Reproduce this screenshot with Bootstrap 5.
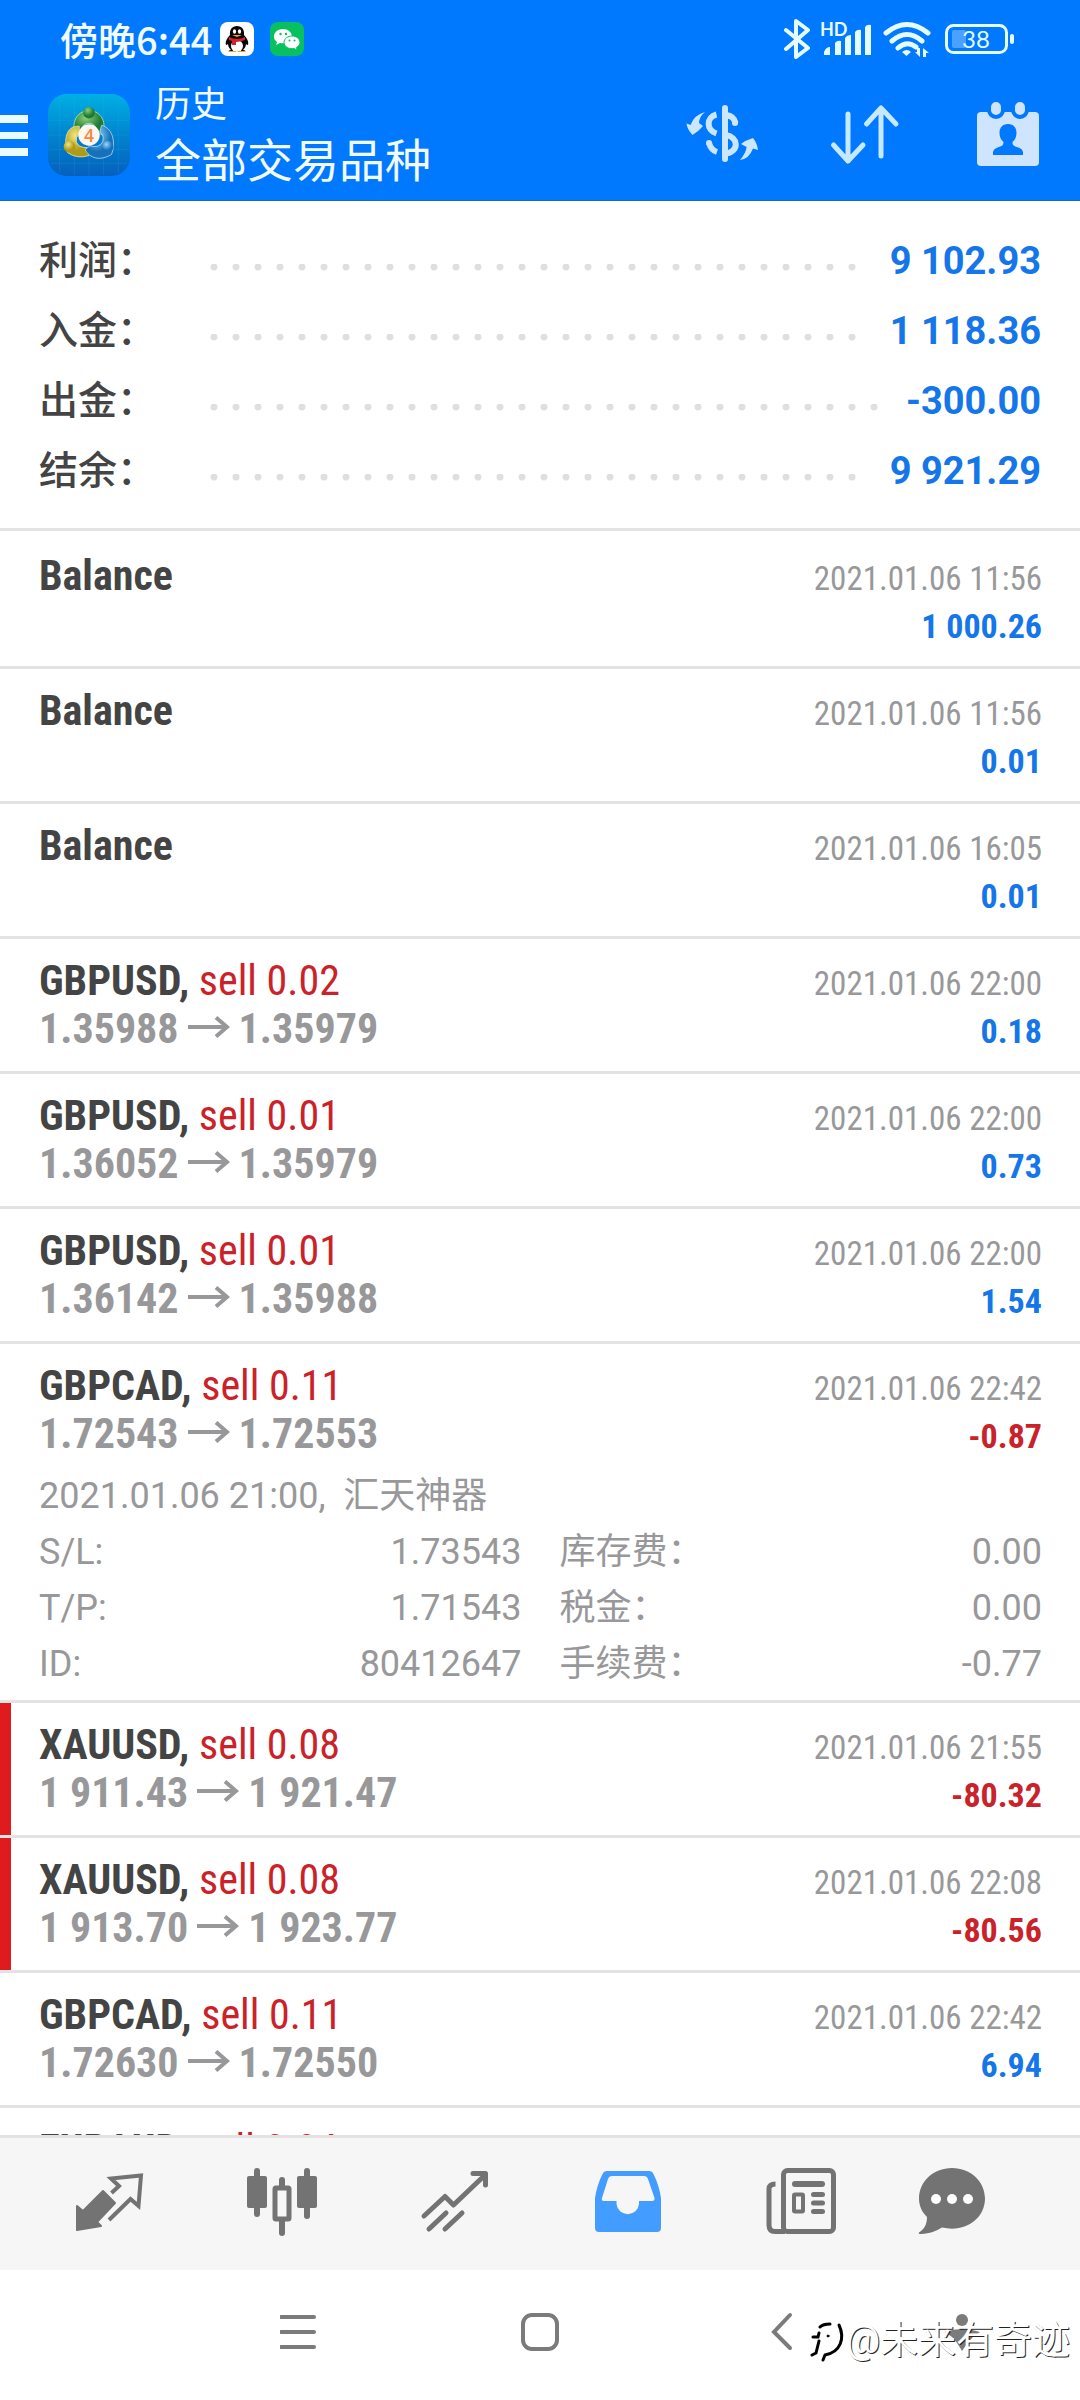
<!DOCTYPE html>
<html lang="zh-CN">
<head>
<meta charset="utf-8">
<meta name="viewport" content="width=device-width, initial-scale=1">
<title>历史</title>
<link rel="stylesheet" href="https://cdn.jsdelivr.net/npm/bootstrap@5.3.0/dist/css/bootstrap.min.css">
<style>
  body { font-family: Roboto, "Noto Sans CJK SC", sans-serif; background: #fff; color: #444; }
  svg { display: block; flex: none; }
  .bar-top { background: #0079ff; color: #f0faff; border-bottom: 1px solid #1a66b0; }
  .status { height: 70px; padding: 8px 65px 0 60px; font: 500 38px/62px "Noto Sans CJK SC", sans-serif; }
  .appbar { height: 130px; padding-right: 36px; }
  .appbar .tools { gap: 71px; }
  .plain-btn { background: none; border: 0; padding: 0; color: inherit; }
  .menu-btn { margin-right: 20px; }
  .heading { margin-left: 25px; padding-top: 2px; }
  .heading h1 { font-size: 46px; line-height: 62px; font-weight: 400; margin: 0; }
  .heading p { font-size: 36px; line-height: 50px; margin: 0; }
  .totals { padding: 25px 39px 22px; border-bottom: 3px solid #e3e3e3; font-size: 39px; line-height: 70px; font-weight: 500; }
  .totals dt { width: 171px; font-weight: 500; }
  .totals dd { color: #1476e8; font-size: 38px; font-weight: 700; margin: 0; }
  .dots { height: 7px; margin: 13px 26px 0 0; background: radial-gradient(circle at 4px 3px, #dfdfdf 3px, transparent 4px) 0 0 / 22px 7px repeat-x; }
  .deals { padding-top: 3px; font-family: "Roboto Condensed", "Liberation Sans Narrow", Roboto, "Noto Sans CJK SC", sans-serif; }
  .deal { padding: 18px 38px 18px 39px; border-bottom: 3px solid #e3e3e3; line-height: 48px; }
  .deal.stopped { background: linear-gradient(#e01b1e, #e01b1e) 0 0 / 11px 100% no-repeat; }
  .line { display: flex; align-items: baseline; height: 48px; }
  .line::before { content: "\200b"; font-size: 42px; }
  .symbol, .side, .price { font-size: 42px; }
  .symbol, .price { font-weight: 700; }
  .side { font-weight: 400; color: #cb2229; }
  .price { color: #98989a; }
  .price svg { display: inline-block; margin: 0 9px; vertical-align: 5px; }
  .stamp { font-size: 33px; color: #98989a; margin-left: auto; }
  .gain, .loss { font-size: 34px; font-weight: 700; color: #1476e8; margin-left: auto; }
  .loss { color: #c9222a; }
  .extra { margin: 10px 0 -10px; font: 400 36px/56px Roboto, "Noto Sans CJK SC", sans-serif; color: #98989a; }
  .extra .cols { display: grid; grid-template-columns: 1fr 1fr; column-gap: 38px; }
  .tabs { height: 135px; background: #f6f6f6; border-top: 3px solid #e3e3e3; color: #737373; padding: 0 63px 0 22px; display: grid; grid-template-columns: repeat(5, 4fr) 3fr; }
  .tabs a { color: inherit; }
  .tabs a.current { color: #439cff; }
  .sysnav { height: 130px; display: grid; grid-template-columns: 3fr 4fr 4fr 4fr 2fr 1fr; color: #7b7b7b; padding-bottom: 6px; }
  .sysnav button:first-child { grid-column: 2; }
  .stamp-mark { right: 10px; bottom: 32px; font-size: 38px; line-height: 56px; color: #fff; text-shadow: 1px 1px 0 #222; }
</style>
<script src="https://cdn.jsdelivr.net/npm/bootstrap@5.3.0/dist/js/bootstrap.bundle.min.js"></script>
</head>
<body>
<svg width="0" height="0" class="position-absolute" aria-hidden="true">
  <symbol id="to" viewBox="0 0 42 22"><path d="M0 11H39M28 1.500L39 11L28 20.500" fill="none" stroke="#98989a" stroke-width="4"/></symbol>
</svg>
<div class="d-flex flex-column vh-100 overflow-hidden position-relative">
  <header class="bar-top flex-shrink-0">
    <div class="status d-flex align-items-center">
      <span>傍晚6:44</span>
      <svg class="ms-2" width="34" height="34" viewBox="0 0 34 34"><rect width="34" height="34" rx="8" fill="#fff"/><path d="M17 4c-5 0-7.500 3.500-7 9-3 3-5 7-4 10 1 0 2-1 2-1 0 3 2 5 3 6-2 0-3 1-2 2h16c1-1 0-2-2-2 1-1 3-3 3-6 0 0 1 1 2 1 1-3-1-7-4-10 .5-5.500-2-9-7-9z" fill="#080808"/><ellipse cx="17" cy="24" rx="6" ry="6" fill="#fff"/><ellipse cx="14.500" cy="9.500" rx="1.600" ry="2.200" fill="#fff"/><ellipse cx="19.500" cy="9.500" rx="1.600" ry="2.200" fill="#fff"/><path d="M12 13h10l-5 2z" fill="#f5a01e"/><path d="M9 15q8 4 16 0v3q-5 2-9 2v3h-4v-4l-3-1z" fill="#d8202a"/><path d="M9 29h6v1H9zM19 29h6v1h-6z" fill="#f5a01e"/></svg>
      <svg class="ms-3" width="34" height="34" viewBox="0 0 34 34"><rect width="34" height="34" rx="8" fill="#07c160"/><path d="M13 7C8 7 4 10 4 14.500c0 2.500 1 4 3 5.500l-1 3 4-2c6 1 11-1 12-6C22 10 18 7 13 7z" fill="#fff"/><path d="M22 14c-4 0-8 2.500-8 6.500s5 7 10 6l3 1.500-.500-2.500c2-1.500 3.500-3 3.500-5 0-4-4-6.500-8-6.500z" fill="#fff" stroke="#07c160"/><g fill="#07c160"><circle cx="10.500" cy="12" r="1.200"/><circle cx="16" cy="12" r="1.200"/><circle cx="19.500" cy="18.500" r="1"/><circle cx="24.500" cy="18.500" r="1"/></g></svg>
      <svg class="ms-auto" width="231" height="42" viewBox="784 18 231 42" fill="none" stroke="#e4fbff">
        <path d="M786 30L808 48L796 57V21L808 30L786 49" stroke-width="4" stroke-linejoin="round" stroke-linecap="round"/>
        <text x="820" y="36" font-family="Lato" font-size="18" font-weight="700" fill="#e4fbff" stroke="none">HD</text>
        <path d="M824 55v-3q2-5 6-5v8zM835 55V43q2-3 6-2v14zM845 55V38q2-3 6-3v20zM855 55V32q2-3 6-2v25zM865 55V27q2-3 6-2v30z" fill="#e4fbff" stroke="none"/>
        <path d="M886 33Q907 16 928 33M892 41Q907 28 922 41M898 48Q907 40 916 47" stroke-width="5" stroke-linecap="round"/>
        <path d="M902 52q5-4 9 0l-4.500 4zM917 48h3v9l-5-5h2zM923 57v-9l6 5h-3v4z" fill="#e4fbff" stroke="none"/>
        <rect x="952" y="30" width="14" height="18" rx="2" fill="#4aa1ff" stroke="none"/>
        <rect x="946.500" y="25.500" width="60" height="27" rx="7" stroke-width="3"/>
        <path d="M1012 36v6" stroke-width="4" stroke-linecap="round"/>
        <text x="976" y="48" text-anchor="middle" font-family="Lato" font-size="24" font-weight="400" fill="#e4fbff" stroke="none">38</text>
      </svg>
    </div>
    <div class="appbar d-flex align-items-center">
      <button class="plain-btn menu-btn" type="button" aria-label="菜单"><svg width="28" height="42" viewBox="0 0 28 42" fill="#eafaff"><path d="M0 1h28v8H0zM0 18h28v7H0zM0 34h28v8H0z"/></svg></button>
      <svg width="82" height="82" viewBox="0 0 84 84">
        <defs><linearGradient id="tile" x2="0" y2="1"><stop stop-color="#00b0e4"/><stop offset=".5" stop-color="#0084cf"/><stop offset="1" stop-color="#0560bd"/></linearGradient>
        <radialGradient id="gr" cx=".4" cy=".3"><stop stop-color="#8bd07a"/><stop offset="1" stop-color="#1d7a34"/></radialGradient>
        <radialGradient id="ye" cx=".4" cy=".3"><stop stop-color="#f4e681"/><stop offset="1" stop-color="#ad9a17"/></radialGradient>
        <radialGradient id="bl" cx=".4" cy=".3"><stop stop-color="#9bd8ff"/><stop offset="1" stop-color="#1671b8"/></radialGradient></defs>
        <rect width="84" height="84" rx="19" fill="url(#tile)"/>
        <path d="M12 3v78M27 1v82M42 0v84M57 1v82M72 3v78M1 27h82M1 42h82M1 57h82M3 71h78" stroke="#35b1e8" stroke-opacity=".2"/>
        <path d="M28 42C23 26 32 17 42 17s19 9 14 25l-6-3q-1-9-8-9t-8 9z" fill="url(#gr)" stroke="#c4e8b8" stroke-width=".8"/>
        <path d="M32 33C18 32 16 48 20 60q10 7 22 3l-2-8q-9 0-11-6-1-5 3-8z" fill="url(#ye)" stroke="#f2eaa8" stroke-width=".8"/>
        <path d="M55 32c13 4 14 20 10 30-12 7-22 4-27-5l5-4q9 3 13-4 2-7-3-10z" fill="url(#bl)" stroke="#b5e0fb" stroke-width=".8"/>
        <circle cx="42" cy="19" r="6" fill="url(#gr)"/><circle cx="22" cy="54" r="6" fill="url(#ye)"/><circle cx="61" cy="54" r="6" fill="url(#bl)"/>
        <circle cx="42" cy="42" r="11" fill="#fff6ef"/>
        <text x="42" y="49" text-anchor="middle" font-family="Open Sans" font-size="18" font-weight="600" fill="#f7873a">4</text>
      </svg>
      <div class="heading"><p>历史</p><h1>全部交易品种</h1></div>
      <div class="tools d-flex ms-auto">
        <button class="plain-btn" type="button" aria-label="交易品种"><svg width="72" height="72" viewBox="0 0 72 72" fill="none" stroke="#cbe6ff" stroke-width="6"><path d="M39 9V60" stroke-linecap="round"/><path d="M30.500 15.500C20 18 20 31 30.500 34.500M40 16Q48 17 49.500 24M40 36C52 38 54 52 40 54.500M23 44Q25 51 31 53"/><path d="M49 24h.1M23 44h.1" stroke-linecap="round"/><path d="M19 13Q13 18 13 24L17 27Q12 33 6.500 36Q1 30 .5 24.500L4.500 26Q8 16 19 13zM54 61Q60 54 60.600 48L55 45Q60 41 67 39Q71 44 72 51L67 49.500Q63 60 54 61z" fill="#cbe6ff" stroke="none"/></svg></button>
        <button class="plain-btn" type="button" aria-label="排序"><svg width="72" height="72" viewBox="0 0 72 72" fill="none" stroke="#c6e9ff" stroke-width="5" stroke-linecap="round" stroke-linejoin="round"><path d="M19 15V62M4.500 46L19 62L34 46M52 57V9M37.500 25L52 9L67 25"/></svg></button>
        <button class="plain-btn" type="button" aria-label="日期"><svg width="72" height="72" viewBox="0 0 72 72"><rect x="5" y="13" width="62" height="54" rx="4" fill="#cfe4ff"/><g fill="#cfe4ff" stroke="#0079ff" stroke-width="4"><rect x="17" y="1" width="14" height="17" rx="7"/><rect x="41" y="1" width="14" height="17" rx="7"/></g><path d="M36 25c-6 0-8.500 4-8.500 9 0 4 1.500 7 4 9 0 4-2 4-7 6q-3 1-3.500 4v3h30v-3q-.5-3-3.500-4c-5-2-7-2-7-6 2.500-2 4-5 4-9 0-5-2.500-9-8.500-9z" fill="#0079ff"/></svg></button>
      </div>
    </div>
  </header>

  <main class="flex-grow-1 overflow-hidden">
    <dl class="totals mb-0">
      <div class="d-flex align-items-center"><dt>利润：</dt><span class="dots flex-grow-1"></span><dd>9 102.93</dd></div>
      <div class="d-flex align-items-center"><dt>入金：</dt><span class="dots flex-grow-1"></span><dd>1 118.36</dd></div>
      <div class="d-flex align-items-center"><dt>出金：</dt><span class="dots flex-grow-1"></span><dd>-300.00</dd></div>
      <div class="d-flex align-items-center"><dt>结余：</dt><span class="dots flex-grow-1"></span><dd>9 921.29</dd></div>
    </dl>
    <ul class="deals list-unstyled mb-0">
      <li class="deal">
        <div class="line"><span class="symbol">Balance</span><span class="stamp">2021.01.06 11:56</span></div>
        <div class="line"><span class="gain">1 000.26</span></div>
      </li>
      <li class="deal">
        <div class="line"><span class="symbol">Balance</span><span class="stamp">2021.01.06 11:56</span></div>
        <div class="line"><span class="gain">0.01</span></div>
      </li>
      <li class="deal">
        <div class="line"><span class="symbol">Balance</span><span class="stamp">2021.01.06 16:05</span></div>
        <div class="line"><span class="gain">0.01</span></div>
      </li>
      <li class="deal">
        <div class="line"><span class="symbol">GBPUSD, <span class="side">sell 0.02</span></span><span class="stamp">2021.01.06 22:00</span></div>
        <div class="line"><span class="price">1.35988<svg width="42" height="22"><use href="#to"/></svg>1.35979</span><span class="gain">0.18</span></div>
      </li>
      <li class="deal">
        <div class="line"><span class="symbol">GBPUSD, <span class="side">sell 0.01</span></span><span class="stamp">2021.01.06 22:00</span></div>
        <div class="line"><span class="price">1.36052<svg width="42" height="22"><use href="#to"/></svg>1.35979</span><span class="gain">0.73</span></div>
      </li>
      <li class="deal">
        <div class="line"><span class="symbol">GBPUSD, <span class="side">sell 0.01</span></span><span class="stamp">2021.01.06 22:00</span></div>
        <div class="line"><span class="price">1.36142<svg width="42" height="22"><use href="#to"/></svg>1.35988</span><span class="gain">1.54</span></div>
      </li>
      <li class="deal">
        <div class="line"><span class="symbol">GBPCAD, <span class="side">sell 0.11</span></span><span class="stamp">2021.01.06 22:42</span></div>
        <div class="line"><span class="price">1.72543<svg width="42" height="22"><use href="#to"/></svg>1.72553</span><span class="loss">-0.87</span></div>
        <div class="extra">
          <div>2021.01.06 21:00, &nbsp;汇天神器</div>
          <div class="cols">
            <div class="d-flex justify-content-between"><span>S/L:</span><span>1.73543</span></div>
            <div class="d-flex justify-content-between"><span>库存费：</span><span>0.00</span></div>
            <div class="d-flex justify-content-between"><span>T/P:</span><span>1.71543</span></div>
            <div class="d-flex justify-content-between"><span>税金：</span><span>0.00</span></div>
            <div class="d-flex justify-content-between"><span>ID:</span><span>80412647</span></div>
            <div class="d-flex justify-content-between"><span>手续费：</span><span>-0.77</span></div>
          </div>
        </div>
      </li>
      <li class="deal stopped">
        <div class="line"><span class="symbol">XAUUSD, <span class="side">sell 0.08</span></span><span class="stamp">2021.01.06 21:55</span></div>
        <div class="line"><span class="price">1 911.43<svg width="42" height="22"><use href="#to"/></svg>1 921.47</span><span class="loss">-80.32</span></div>
      </li>
      <li class="deal stopped">
        <div class="line"><span class="symbol">XAUUSD, <span class="side">sell 0.08</span></span><span class="stamp">2021.01.06 22:08</span></div>
        <div class="line"><span class="price">1 913.70<svg width="42" height="22"><use href="#to"/></svg>1 923.77</span><span class="loss">-80.56</span></div>
      </li>
      <li class="deal">
        <div class="line"><span class="symbol">GBPCAD, <span class="side">sell 0.11</span></span><span class="stamp">2021.01.06 22:42</span></div>
        <div class="line"><span class="price">1.72630<svg width="42" height="22"><use href="#to"/></svg>1.72550</span><span class="gain">6.94</span></div>
      </li>
      <li class="deal">
        <div class="line"><span class="symbol">EURAUD, <span class="side">sell 0.04</span></span></div>
      </li>
    </ul>
  </main>

  <nav class="tabs flex-shrink-0">
    <a href="#quotes" class="d-flex align-items-center justify-content-center" aria-label="行情"><svg width="72" height="72" viewBox="0 0 72 72"><path d="M4 38L10 43L30 23L42 35L24 54L28 58L4 62z" fill="currentColor" stroke="currentColor" stroke-width="2" stroke-linejoin="round"/><path d="M36 52L57.500 31L65.500 38L68 7.500L38 10.500L46 18L38.500 25" fill="none" stroke="currentColor" stroke-width="4"/></svg></a>
    <a href="#charts" class="d-flex align-items-center justify-content-center" aria-label="图表"><svg width="72" height="72" viewBox="0 0 72 72" fill="currentColor"><rect x="8" width="6" height="49" rx="3"/><rect x="1" y="8" width="20" height="32" rx="2"/><rect x="58" width="6" height="51" rx="3"/><rect x="51" y="8" width="20" height="32" rx="2"/><rect x="33" y="9" width="6" height="12" rx="3"/><rect x="33" y="50" width="6" height="18" rx="3"/><rect x="29" y="20" width="14" height="31" rx="1" fill="none" stroke="currentColor" stroke-width="5"/></svg></a>
    <a href="#trade" class="d-flex align-items-center justify-content-center" aria-label="交易"><svg width="72" height="72" viewBox="0 0 72 72" fill="none" stroke="currentColor" stroke-width="5" stroke-linecap="round" stroke-linejoin="round"><path d="M5 48L26 28.500L34.500 37L66 7M54 5.500H66.500V17M10 61L27 45M26 61L43 45"/></svg></a>
    <a href="#history" class="current d-flex align-items-center justify-content-center" aria-label="历史"><svg width="72" height="72" viewBox="0 0 72 72"><path fill="currentColor" fill-rule="evenodd" d="M15 3H57Q60 3 61.500 6Q67 17 69 30V60Q69 64 65 64H7Q3 64 3 60V30Q5 17 10.500 6Q12 3 15 3zM20 8Q17 8 16 11L10 30Q9 33 12 33H24.500V36A11.300 11.300 0 0 0 47 36V33H60Q63 33 62.500 30L56 11Q55 8 52 8z"/></svg></a>
    <a href="#news" class="d-flex align-items-center justify-content-center" aria-label="新闻"><svg width="72" height="72" viewBox="0 0 72 72" fill="none" stroke="currentColor" stroke-width="5"><rect x="18.500" y="2.500" width="50" height="61" rx="4"/><path d="M10.500 16Q4 16 4 21V57Q4 63.500 10 63.500H20"/><path d="M30 16H57" stroke-width="6" stroke-linecap="round"/><rect x="29" y="26.500" width="9" height="17" stroke-width="4" rx="1"/><path d="M48.500 26.500H57.500M48.500 35H57.500M48.500 43.500H57.500" stroke-linecap="round"/></svg></a>
    <a href="#messages" class="d-flex align-items-center justify-content-center" aria-label="消息"><svg width="72" height="72" viewBox="0 0 72 72"><path d="M36 0C17 0 3 14 3 30.500C3 38 6 44 11 49C11 57 8 61 3 64.500Q2 66 5 66C14 65.500 20 63 26 59.500C50 65 69 50 69 30.500C69 14 55 0 36 0z" fill="currentColor"/><g fill="#fff"><circle cx="20" cy="31" r="5"/><circle cx="36" cy="31" r="5"/><circle cx="52" cy="31" r="5"/></g></svg></a>
  </nav>

  <div class="sysnav flex-shrink-0">
    <button class="plain-btn d-flex align-items-center justify-content-center" type="button" aria-label="最近任务"><svg width="40" height="40" viewBox="0 0 40 40" stroke="currentColor" stroke-width="4" stroke-linecap="round"><path d="M1 5H34M1 20H34M1 35H34"/></svg></button>
    <button class="plain-btn d-flex align-items-center justify-content-center" type="button" aria-label="主屏幕"><svg width="40" height="40" viewBox="0 0 40 40"><rect x="3" y="3" width="34" height="34" rx="9" fill="none" stroke="currentColor" stroke-width="4"/></svg></button>
    <button class="plain-btn d-flex align-items-center justify-content-center" type="button" aria-label="返回"><svg width="40" height="40" viewBox="0 0 40 40"><path d="M30 3L14 20L30 36" fill="none" stroke="currentColor" stroke-width="4" stroke-linecap="round"/></svg></button>
    <button class="plain-btn d-flex align-items-center justify-content-center" type="button" aria-label="辅助功能"><svg width="40" height="40" viewBox="0 0 40 40" fill="currentColor"><circle cx="22" cy="8" r="6"/><path d="M5 20Q22 14 40 20L33 25Q28 30 22 39Q17 30 12 25z"/></svg></button>
  </div>

  <div class="stamp-mark position-absolute d-flex align-items-center">
    <svg width="36" height="44" viewBox="0 0 36 44" fill="none" stroke="#000" stroke-linecap="round"><path d="M3 19H8L9 15M10 9Q13 6 20 6M9 23L6 35L2 37" stroke-width="3"/><path d="M29 7C35 20 31 34 15 37L13 42" stroke-width="3"/><circle cx="18" cy="18" r="1" fill="#000"/></svg>
    <span>@未来有奇迹</span>
  </div>
</div>
</body>
</html>
